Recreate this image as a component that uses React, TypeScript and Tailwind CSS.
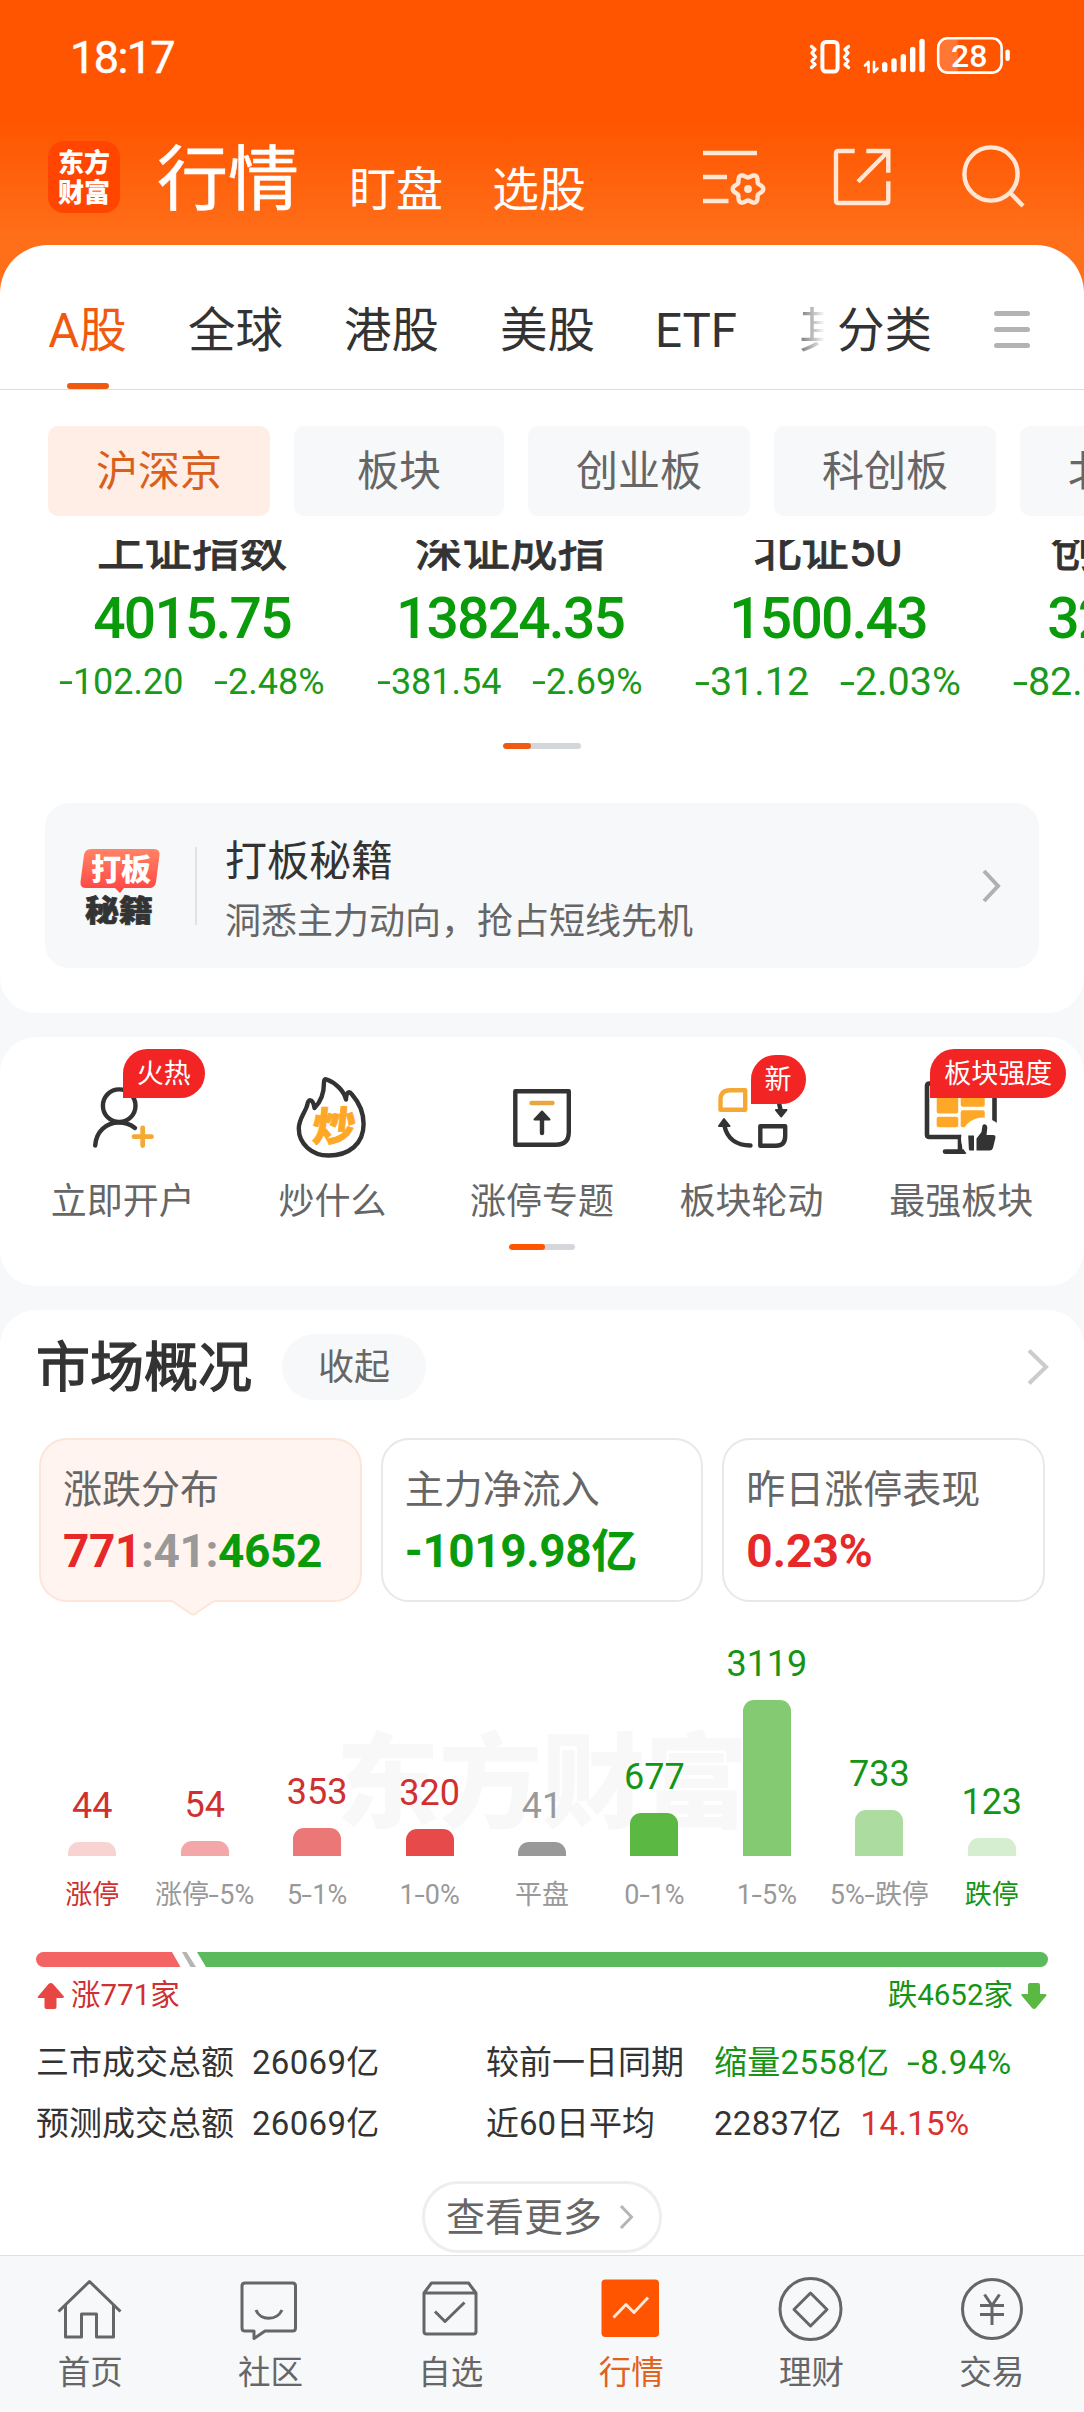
import React from 'react';

const gearPoints = Array.from({ length: 90 }, (_, i) => {
  const a = (i / 90) * Math.PI * 2;
  const r = 13.4 + 1.9 * Math.cos(6 * a);
  return `${(48 + r * Math.cos(a)).toFixed(2)},${(44 + r * Math.sin(a)).toFixed(2)}`;
}).join(' ');

// Hyphens in quotes are drawn a little wider than the font's own
const Num: React.FC<{ children: string }> = ({ children }) => (
  <span>
    {children.split(/(-)/).map((part, i) =>
      part === '-' ? (
        <span key={i} className="mx-[0.05em] inline-block scale-x-140">-</span>
      ) : (
        part
      )
    )}
  </span>
);

const StatusIcons: React.FC = () => (
  <svg width="208" height="42" viewBox="0 0 208 42" fill="none" stroke="#fff" className="mb-1">
    <rect x="17.4" y="8" width="15.2" height="29.6" rx="3.5" strokeWidth="4" />
    <path d="M6.5 12.5l3.5 3-3 3.5 3.5 4-3.5 4 3 3.5-3.5 3M43.5 12.5l-3.5 3 3 3.5-3.5 4 3.5 4-3 3.5 3.5 3" strokeWidth="3.4" strokeLinecap="round" strokeLinejoin="round" />
    <path d="M60 31.5l3.5-3.5v10M72.5 34.5L69 38V28" strokeWidth="2.6" strokeLinecap="round" strokeLinejoin="round" />
    <path d="M79.7 30.8v4.8M89 27v8.6M98.3 22.8v12.8M107.7 15.5v20.1M117 7.5v28.1" strokeWidth="5.4" strokeLinecap="round" />
    <path d="M152.7 4.5H142a9 9 0 0 0-9 9v16a9 9 0 0 0 9 9h10.7z" fill="#fff" fillOpacity="0.2" stroke="none" />
    <rect x="133.2" y="4.2" width="63.4" height="34.4" rx="9.5" strokeWidth="2.6" />
    <rect x="200.4" y="15.4" width="4.4" height="11.6" rx="2.2" fill="#fff" stroke="none" />
    <text x="164.3" y="32.7" textAnchor="middle" fill="#fff" stroke="none" className="font-['Roboto',sans-serif] text-[32px] font-medium">28</text>
  </svg>
);

const HeaderIcons: React.FC = () => (
  <div className="mt-0.5 ml-auto flex">
    <svg width="70" height="66" viewBox="0 0 70 66" fill="none" stroke="#ffe6d5" strokeWidth="4.4">
      <path d="M3 8h54M3 32h24M3 56h25.5" />
      <polygon points={gearPoints} strokeWidth="4.4" strokeLinejoin="round" />
      <circle cx="48" cy="44" r="3.9" fill="#ffe6d5" stroke="none" />
    </svg>
    <svg width="64" height="66" viewBox="0 0 64 66" fill="none" stroke="#ffe6d5" strokeWidth="4.4" className="ml-[60px]">
      <path d="M24.7 6H8.5Q6 6 6 8.500V55.500Q6 58 8.500 58H56Q58.3 58 58.3 55.500V36.3" />
      <path d="M36.3 6H58.3V27.7M57.5 7L28 36.7" />
    </svg>
    <svg width="68" height="66" viewBox="0 0 68 66" fill="none" stroke="#ffe6d5" strokeWidth="4.4" className="ml-[66px]">
      <circle cx="31" cy="29" r="26.6" />
      <path d="M49.5 47L63 61" />
    </svg>
  </div>
);

const Header: React.FC = () => (
  <header className="h-[293px] bg-[linear-gradient(to_bottom,#ff5500_0,#ff5500_120px,#ff6f1a_240px)] text-white">
    <div className="flex h-[114px] items-center justify-between pr-[71px] pl-[70px]">
      <span className="text-[45px] leading-none tracking-[-1.6px] [-webkit-text-stroke:0.5px]">18:17</span>
      <StatusIcons />
    </div>
    <div className="flex h-[126px] items-center pr-14 pl-12">
      <div className="flex h-[72px] w-[72px] flex-col items-center justify-center rounded-2xl bg-[#ff4500] pt-0.5 text-[26px] leading-[30px] font-black">
        <span>东方</span>
        <span>财富</span>
      </div>
      <span className="ml-[37px] pt-1 text-[71px] leading-none [-webkit-text-stroke:0.6px]">行情</span>
      <span className="ml-[50px] pt-[25px] text-[47px] leading-none">盯盘</span>
      <span className="ml-[49px] pt-[25px] text-[47px] leading-none">选股</span>
      <HeaderIcons />
    </div>
  </header>
);

const MarketTabs: React.FC = () => (
  <nav className="flex h-[145px] border-b border-[#dedede] pt-[56px] pr-[54px] pl-12 text-[47.5px] leading-[60px] text-[#333]">
    <div className="flex w-[79px] flex-col items-center text-[#f05a10]">
      <span>A股</span>
      <span className="mt-[22px] h-1.5 w-[42px] rounded-full bg-[#f05a10]" />
    </div>
    <span className="ml-[61px]">全球</span>
    <span className="ml-[61px]">港股</span>
    <span className="ml-[61px]">美股</span>
    <span className="ml-[60px] w-[84px]">ETF</span>
    <span className="ml-[60px] w-[26px] overflow-hidden bg-linear-to-r from-[#777] to-white bg-clip-text text-transparent">其</span>
    <span className="ml-3">分类</span>
    <div className="-mt-[2px] ml-auto flex h-[60px] w-9 flex-col justify-center gap-[11px]">
      <span className="h-[5px] rounded-full bg-[#b3b3b3]" />
      <span className="h-[5px] rounded-full bg-[#b3b3b3]" />
      <span className="h-[5px] rounded-full bg-[#b3b3b3]" />
    </div>
  </nav>
);

const Chips: React.FC = () => (
  <div className="mt-9 flex h-[90px] gap-6 overflow-hidden pl-12 text-[42px] leading-[92px] text-[#666] [&>span]:h-[90px] [&>span]:shrink-0 [&>span]:rounded-[10px] [&>span]:text-center">
    <span className="w-[222px] bg-[#ffeee5] text-[#d9601c]">沪深京</span>
    <span className="w-[210px] bg-[#f7f8fa]">板块</span>
    <span className="w-[222px] bg-[#f7f8fa]">创业板</span>
    <span className="w-[222px] bg-[#f7f8fa]">科创板</span>
    <span className="w-[222px] bg-[#f7f8fa]">北交所</span>
  </div>
);

const indices = [
  { name: '上证指数', value: '4015.75', diff: '-102.20', pct: '-2.48%', size: 'text-[36px]' },
  { name: '深证成指', value: '13824.35', diff: '-381.54', pct: '-2.69%', size: 'text-[36px]' },
  { name: '北证50', value: '1500.43', diff: '-31.12', pct: '-2.03%', size: 'text-[39.5px]' },
  { name: '创业板指', value: '3247.52', diff: '-82.71', pct: '-2.48%', size: 'text-[39.5px]' },
];

const Indices: React.FC = () => (
  <div className="mt-6 flex h-[180px] overflow-hidden pl-[33px]">
    {indices.map((it) => (
      <div key={it.name} className="-mt-[20px] flex w-[318px] shrink-0 flex-col items-center whitespace-nowrap">
        <span className="h-[60px] text-[47.5px] leading-[60px] text-[#333] [-webkit-text-stroke:1px]">{it.name}</span>
        <span className="mt-[9px] text-[57px] leading-[60px] font-medium tracking-[-1.8px] text-[#0a9b0a]">{it.value}</span>
        <span className={`mt-2 flex gap-[31px] leading-[50px] text-[#1a991a] ${it.size}`}>
          <Num>{it.diff}</Num>
          <Num>{it.pct}</Num>
        </span>
      </div>
    ))}
  </div>
);

const Banner: React.FC = () => (
  <div className="mx-[45px] mt-[54px] flex h-[165px] items-center rounded-3xl bg-[#f7f8fa] pr-[38px] pl-[35px]">
    <svg width="80" height="80" viewBox="0 0 80 80" className="mt-0.5">
      <defs>
        <linearGradient id="bubble" x1="0" y1="0" x2="0" y2="1">
          <stop offset="0" stopColor="#ff8466" />
          <stop offset="1" stopColor="#ff4343" />
        </linearGradient>
      </defs>
      <path d="M9 2H74Q80 2 79.5 8L76 35Q75 41 69 41H44L40 46L35 41H6Q0 41 .5 35L4 8Q5 2 11 2Z" fill="url(#bubble)" />
      <text x="41" y="32.5" textAnchor="middle" fill="#fff" className="text-[30px] font-black">打板</text>
      <text transform="translate(39 73.5) scale(1 0.86)" textAnchor="middle" fill="#333" stroke="#333" strokeWidth="0.8" className="text-[34px] font-black">秘籍</text>
    </svg>
    <span className="ml-[35px] h-[78px] w-0.5 bg-[#e2e3e5]" />
    <div className="ml-[28px] flex flex-col pt-3">
      <span className="text-[42px] leading-[60px] text-[#333]">打板秘籍</span>
      <span className="text-[36px] leading-[60px] text-[#666]">洞悉主力动向，抢占短线先机</span>
    </div>
    <svg width="20" height="36" viewBox="0 0 20 36" fill="none" stroke="#b0b0b0" strokeWidth="4" className="ml-auto">
      <path d="M3 3L17 18L3 33" />
    </svg>
  </div>
);

const PersonIcon: React.FC = () => (
  <svg width="84" height="84" viewBox="0 0 84 84" fill="none" stroke="#333" strokeWidth="4.4" strokeLinecap="round">
    <circle cx="38.2" cy="29.7" r="16.3" />
    <path d="M14.2 69.5C15 56 25 46.500 38 46.500C44.5 46.500 49.5 48.500 54 52" />
    <path d="M53 60.7h17.5M61.7 52v17.5" stroke="#f5a833" strokeWidth="4.8" />
  </svg>
);

const FlameIcon: React.FC = () => (
  <svg width="84" height="84" viewBox="0 0 84 84" fill="none" stroke="#333" strokeWidth="4.4" strokeLinejoin="round">
    <path d="M36.8 3.5C46 7 54 15 56 23.5C56.5 15 59.5 15 62 18.5C69.5 27 73.6 38 73.6 48C73.6 68 59 79.5 38.5 79.5C22 79.5 8.8 68 8.8 52.5C8.8 43 15 37 17.3 29C17.6 23 23 21.5 24.5 32C31.5 25 34 14.5 34 6.5C34 3.5 35 2.7 36.8 3.5Z" />
    <text transform="translate(42.5 65) skewX(-6) scale(1 0.94)" textAnchor="middle" fill="#ffa726" stroke="#ffa726" strokeWidth="0.8" className="text-[43px] font-black">炒</text>
  </svg>
);

const LimitUpIcon: React.FC = () => (
  <svg width="84" height="84" viewBox="0 0 84 84" fill="none" stroke="#333" strokeWidth="4.4" strokeLinecap="round" strokeLinejoin="round">
    <path d="M15.3 15.3H68.8V56Q68.8 68.7 56 68.7H15.3Z" />
    <path d="M31.5 27H52.5" stroke="#e8a640" />
    <path d="M42 40V57" />
    <path d="M34.5 43.5L42 35.5L49.5 43.5Z" fill="#333" strokeWidth="2" />
  </svg>
);

const RotateIcon: React.FC = () => (
  <svg width="84" height="84" viewBox="0 0 84 84" fill="none" stroke="#333" strokeWidth="4.4" strokeLinecap="round" strokeLinejoin="round">
    <path d="M35.2 14.2H20Q10.5 14.2 10.5 24V33.8H35.2Z" stroke="#f5a833" />
    <path d="M50.3 50.2H75.2V60Q75.2 69.8 66 69.8H50.3Z" />
    <path d="M14.5 50C17 62 26 69.5 40.5 69.5M69 27L71 36" />
    <path d="M9 50L14 43L19.5 50ZM66 34L76.5 34L71.3 40.5Z" fill="#333" strokeWidth="2" />
  </svg>
);

const MonitorIcon: React.FC = () => (
  <svg width="84" height="84" viewBox="0 0 84 84" fill="none" stroke="#333" strokeWidth="4.6" strokeLinecap="round">
    <path d="M75.5 46V10Q75.5 7.5 73 7.5H10.5Q8 7.5 8 10V58.5Q8 61 10.5 61H44" />
    <path d="M41 61V75.6M26 75.6H46" />
    <g fill="#ffa726" stroke="none">
      <rect x="17.7" y="20" width="21.5" height="17.4" rx="2" />
      <rect x="41.7" y="14" width="24" height="16.7" rx="2" />
      <rect x="17.7" y="40.8" width="21.5" height="10.5" rx="2" />
      <rect x="41.7" y="34.3" width="24" height="17" rx="2" />
    </g>
    <circle cx="63.5" cy="63" r="21.5" fill="#fff" stroke="none" />
    <path d="M49.2 59.5H55V74.5H51Q50 74.5 49.9 73ZM57.5 62.5L62.5 56L63.5 49.5C65 47 68.5 48.5 68.3 52L67.5 59H74Q77 59 76.4 62L74 72Q73.2 74.5 70.5 74.5H57.5Z" fill="#333" stroke="none" />
  </svg>
);

const shortcuts = [
  { label: '立即开户', icon: <PersonIcon />, badge: '火热', pos: 'left-[42px] -top-[27px]' },
  { label: '炒什么', icon: <FlameIcon /> },
  { label: '涨停专题', icon: <LimitUpIcon /> },
  { label: '板块轮动', icon: <RotateIcon />, badge: '新', pos: 'left-[41px] -top-[21px]' },
  { label: '最强板块', icon: <MonitorIcon />, badge: '板块强度', pos: 'left-[11px] -top-[27px]' },
];

const Shortcuts: React.FC = () => (
  <section className="mt-6 flex h-[249px] flex-col items-center rounded-[36px] bg-white px-[18px] pt-[39px]">
    <div className="grid w-full grid-cols-5">
      {shortcuts.map((s) => (
        <div key={s.label} className="flex flex-col items-center">
          <div className="relative h-[84px] w-[84px]">
            {s.icon}
            {s.badge && (
              <span className={`absolute h-[49px] rounded-[25px] rounded-bl-none bg-[#f22424] px-3.5 text-[27px] leading-[51px] whitespace-nowrap text-white ${s.pos}`}>
                {s.badge}
              </span>
            )}
          </div>
          <span className="mt-[17px] text-[36px] leading-[50px] whitespace-nowrap text-[#666]">{s.label}</span>
        </div>
      ))}
    </div>
    <div className="mt-[17px] flex h-1.5 w-[66px] overflow-hidden rounded-full bg-[#d5d7dc]">
      <span className="w-9 rounded-full bg-[#ff5500]" />
    </div>
  </section>
);

const SummaryCards: React.FC = () => (
  <div className="mt-3.5 grid h-[164px] grid-cols-3 gap-[19px] pr-[39px] pl-[39px] [&>div]:rounded-[28px] [&>div]:border-2 [&>div]:pt-[25px] [&>div]:pl-[22px]">
    <div className="relative border-[#fde5d9] bg-[#fff4ef]">
      <p className="text-[39px] leading-[50px] text-[#666]">涨跌分布</p>
      <p className="mt-2.5 text-[46px] leading-[52px] font-bold tracking-[-0.4px] text-[#999]">
        <span className="text-[#e62828]">771</span>:41:<span className="text-[#0a9b0a]">4652</span>
      </p>
      <svg width="42" height="17" viewBox="0 0 42 17" className="absolute top-[159px] left-[131px]">
        <path d="M0 0H42V3L23.5 15Q21 17 18.5 15L0 3Z" fill="#fff4ef" />
        <path d="M0 2L18.5 14.5Q21 16.5 23.5 14.5L42 2" fill="none" stroke="#fde5d9" strokeWidth="2" />
      </svg>
    </div>
    <div className="border-[#e8e8e8]">
      <p className="text-[39px] leading-[50px] text-[#666]">主力净流入</p>
      <p className="mt-2.5 text-[46px] leading-[52px] font-bold tracking-[-0.4px] text-[#0a9b0a]">-1019.98亿</p>
    </div>
    <div className="border-[#e8e8e8]">
      <p className="text-[39px] leading-[50px] text-[#666]">昨日涨停表现</p>
      <p className="mt-2.5 text-[46px] leading-[52px] font-bold text-[#e62828]">0.23%</p>
    </div>
  </div>
);

const bars = [
  { label: '涨停', count: 44, h: 14, bar: 'bg-[#f9d2d2]', num: 'text-[#d03030]', text: 'text-[#d03030]' },
  { label: '涨停-5%', count: 54, h: 15, bar: 'bg-[#f3a7a8]', num: 'text-[#d03030]', text: 'text-[#999]' },
  { label: '5-1%', count: 353, h: 28, bar: 'bg-[#ec7777]', num: 'text-[#d03030]', text: 'text-[#999]' },
  { label: '1-0%', count: 320, h: 27, bar: 'bg-[#e64a4a]', num: 'text-[#d03030]', text: 'text-[#999]' },
  { label: '平盘', count: 41, h: 14, bar: 'bg-[#999]', num: 'text-[#999]', text: 'text-[#999]' },
  { label: '0-1%', count: 677, h: 43, bar: 'bg-[#5bb943]', num: 'text-[#159415]', text: 'text-[#999]' },
  { label: '1-5%', count: 3119, h: 156, bar: 'bg-[#84ca73]', num: 'text-[#159415]', text: 'text-[#999]' },
  { label: '5%-跌停', count: 733, h: 46, bar: 'bg-[#addca1]', num: 'text-[#159415]', text: 'text-[#999]' },
  { label: '跌停', count: 123, h: 18, bar: 'bg-[#d6eed0]', num: 'text-[#159415]', text: 'text-[#159415]' },
];

const Distribution: React.FC = () => (
  <div className="relative px-9">
    <span className="absolute top-[123px] left-[336px] text-[103px] leading-[120px] font-black text-[#f8f8f8]">东方财富</span>
    <div className="relative grid h-[254px] grid-cols-9 items-end">
      {bars.map((b) => (
        <div key={b.label} className="flex flex-col items-center">
          <span className={`mb-[15px] text-[36px] leading-[42px] ${b.num}`}>{b.count}</span>
          <span className={`w-12 rounded-t-[11px] ${b.bar}`} style={{ height: b.h }} />
        </div>
      ))}
    </div>
    <div className="mt-[19px] grid grid-cols-9 text-[27px] leading-10">
      {bars.map((b) => (
        <span key={b.label} className={`flex justify-center whitespace-nowrap ${b.text}`}>
          <Num>{b.label}</Num>
        </span>
      ))}
    </div>
  </div>
);

const UpDown: React.FC = () => (
  <div className="mt-[37px] px-9">
    <svg width="1012" height="15" viewBox="0 0 1012 15" className="block">
      <path d="M7.5 0H136L144.5 15H7.5A7.5 7.5 0 0 1 7.5 0Z" fill="#f56464" />
      <path d="M146 0H150.5L160 15H154.5Z" fill="#b5b5b5" />
      <path d="M161 0H1004.5A7.5 7.5 0 0 1 1004.5 15H170Z" fill="#5bba5b" />
    </svg>
    <div className="mt-2 flex h-10 items-center justify-between text-[29.500px] leading-10">
      <span className="flex items-center gap-[7px] text-[#d03030]">
        <svg width="28" height="28" viewBox="0 0 28 28" fill="#e84545" className="mt-0.5">
          <path d="M12.5 2Q15 0 17 2L28 14.5Q28 16 26 16H20.5V25Q20.5 27 18.5 27H10.5Q8.5 27 8.5 25V16H3Q1 16 2 14.5Z" />
        </svg>
        涨771家
      </span>
      <span className="flex items-center gap-[7px] text-[#159415]">
        跌4652家
        <svg width="28" height="28" viewBox="0 0 28 28" fill="#5bb943" className="mt-0.5">
          <path d="M12 26Q14 28 16 26L26.5 13.5Q27 12 25 12H20V3Q20 1 18 1H10Q8 1 8 3V12H3Q0 12 1.5 13.5Z" />
        </svg>
      </span>
    </div>
  </div>
);

const Stats: React.FC = () => (
  <div className="mt-[23px] grid grid-cols-[216px_234px_228px_1fr] gap-y-[11px] pl-9 text-[33px] leading-[50px] whitespace-nowrap text-[#333]">
    <span>三市成交总额</span>
    <span className="tracking-[0.3px]">26069亿</span>
    <span>较前一日同期</span>
    <span className="flex gap-[18px] text-[#159415]">
      <span className="tracking-[0.3px]">缩量2558亿</span>
      <span className="tracking-[0.6px]"><Num>-8.94%</Num></span>
    </span>
    <span>预测成交总额</span>
    <span className="tracking-[0.3px]">26069亿</span>
    <span>近60日平均</span>
    <span className="flex gap-[19px] tracking-[0.3px]">
      <span>22837亿</span>
      <span className="text-[#d93030]">14.15%</span>
    </span>
  </div>
);

const Overview: React.FC = () => (
  <section className="mt-6 h-[945px] rounded-t-[36px] bg-white">
    <div className="flex h-[114px] items-center pr-[34px] pl-9">
      <span className="pt-1 text-[54px] leading-none text-[#333] [-webkit-text-stroke:1.4px]">市场概况</span>
      <span className="ml-[30px] h-[66px] w-36 rounded-[33px] bg-[#f7f8fa] text-center text-[36px] leading-[68px] text-[#666]">收起</span>
      <svg width="24" height="38" viewBox="0 0 24 38" fill="none" stroke="#ccc" strokeWidth="4" className="ml-auto">
        <path d="M3 2.5L20 19L3 35.5" />
      </svg>
    </div>
    <SummaryCards />
    <Distribution />
    <UpDown />
    <Stats />
    <div className="mx-auto mt-8 flex h-[72px] w-60 items-center rounded-full border-3 border-[#eee] pl-[21px] text-[39px] leading-none text-[#666]">
      <span className="pt-0.5">查看更多</span>
      <svg width="15" height="26" viewBox="0 0 15 26" fill="none" stroke="#b5b5b5" strokeWidth="3" className="ml-[17px]">
        <path d="M2 2L12.5 13L2 24" />
      </svg>
    </div>
  </section>
);

const navItems = [
  { label: '首页', icon: <path d="M1.5 35.5L32.5 5.5L63.5 35.5M8.5 29V61H24.5V38H39.5V61H56.5V29" /> },
  {
    label: '社区',
    icon: <path d="M8 7H55.5Q58.5 7 58.5 10V52Q58.5 55 55.5 55H28L17 62.5V55H8Q5 55 5 52V10Q5 7 8 7ZM19 34C23 45 40 45 45 34" />,
  },
  {
    label: '自选',
    icon: <path d="M13.5 7H50.5L58 17V55.5Q58 58 55.5 58H8.5Q6 58 6 55.5V17ZM6 17H58M17 35.5L27 45.5L46.5 26.5" />,
  },
  {
    label: '行情',
    active: true,
    icon: (
      <>
        <rect x="3.5" y="3.5" width="57.5" height="57.5" rx="4" fill="#ff5500" stroke="none" />
        <path d="M15.5 41.5L28 28.5L36 36.5L50 21.5" stroke="#ffe6d5" />
      </>
    ),
  },
  {
    label: '理财',
    icon: (
      <>
        <circle cx="32.5" cy="33" r="30.5" />
        <path d="M32.5 17L49 33.5L32.5 50L16 33.5Z" />
      </>
    ),
  },
  {
    label: '交易',
    icon: (
      <>
        <circle cx="33" cy="33" r="29.5" />
        <path d="M25.5 18.5L33 29.5L40.5 18.5M21 29.5H45M21 38.5H45M33 29.5V49" />
      </>
    ),
  },
];

const BottomNav: React.FC = () => (
  <nav className="grid h-[157px] grid-cols-6 border-t border-[#dedfe1] bg-[#f7f8fa] pt-5 pr-0.5">
    {navItems.map((n) => (
      <div key={n.label} className={`flex flex-col items-center ${n.active ? 'text-[#e0621c]' : 'text-[#666]'}`}>
        <svg width="66" height="66" viewBox="0 0 66 66" fill="none" stroke="#666" strokeWidth="3" strokeLinejoin="round">
          {n.icon}
        </svg>
        <span className="mt-[11px] text-[32.500px] leading-10">{n.label}</span>
      </div>
    ))}
  </nav>
);

export default function App() {
  return (
    <div className="h-[2412px] w-[1084px] overflow-hidden bg-[#f7f8fa] font-['Roboto','Noto_Sans_CJK_SC',sans-serif]">
      <Header />
      <section className="relative -mt-12 h-[768px] rounded-t-[48px] rounded-b-[36px] bg-white">
        <MarketTabs />
        <Chips />
        <Indices />
        <div className="mx-auto mt-[23px] flex h-1.5 w-[78px] overflow-hidden rounded-full bg-[#d3d7da]">
          <span className="w-7 rounded-full bg-[#f05a10]" />
        </div>
        <Banner />
      </section>
      <Shortcuts />
      <Overview />
      <BottomNav />
    </div>
  );
}
